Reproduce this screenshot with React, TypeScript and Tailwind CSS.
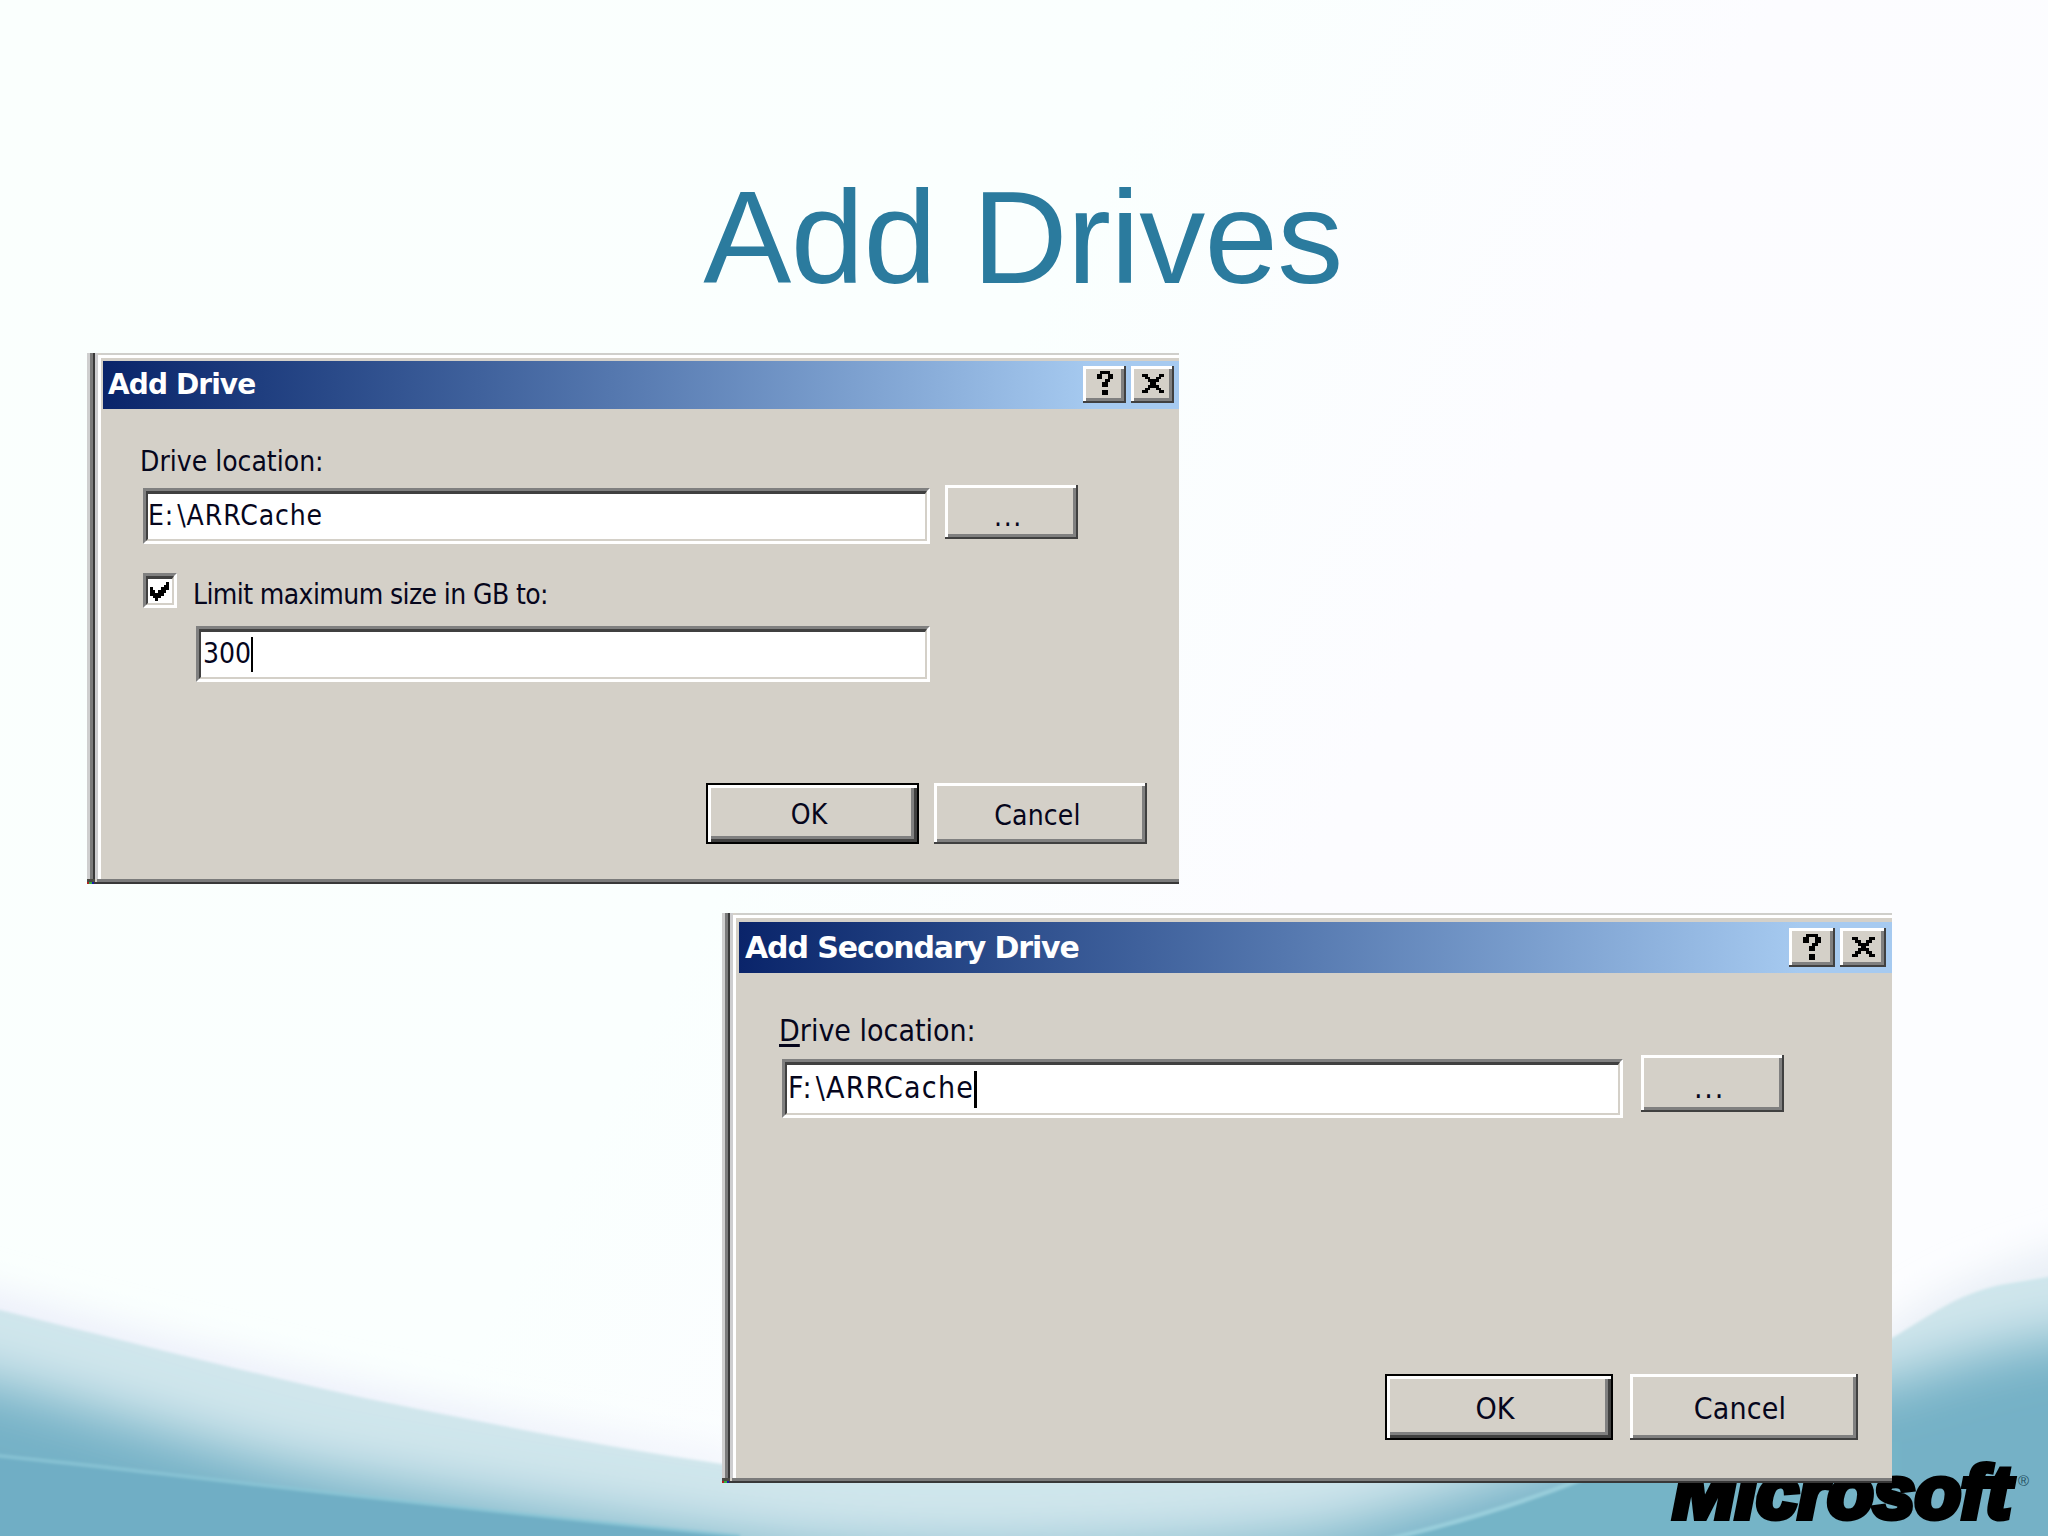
import React from 'react';
import clsx from 'clsx';

type BevelButtonProps = {
  className?: string;
  primary?: boolean;
  label?: string;
  children: React.ReactNode;
};

const BevelButton: React.FC<BevelButtonProps> = ({ className, primary, label, children }) => (
  <button
    type="button"
    aria-label={label}
    className={clsx(
      'flex shrink-0 items-center justify-center bg-[#d4d0c8] whitespace-nowrap text-[#06061c]',
      primary
        ? 'border-2 border-black shadow-[inset_3px_3px_0_#ffffff,inset_-3px_-3px_0_#404040,inset_-6px_-6px_0_#808080]'
        : 'shadow-[inset_-2px_-2px_0_#404040,inset_3px_3px_0_#ffffff,inset_-5px_-5px_0_#808080]',
      className
    )}
  >
    {children}
  </button>
);

type TextFieldProps = {
  className?: string;
  children: React.ReactNode;
};

const TextField: React.FC<TextFieldProps> = ({ className, children }) => (
  <div
    className={clsx(
      'flex shrink-0 border-[3px] border-t-[#808080] border-r-white border-b-white border-l-[#808080] bg-white text-[#06061c]',
      className
    )}
  >
    <div className="flex w-full items-center border-t-[3px] border-r-2 border-b-2 border-l-2 border-t-[#404040] border-r-[#d4d0c8] border-b-[#d4d0c8] border-l-[#404040] whitespace-nowrap">
      {children}
    </div>
  </div>
);

const HelpGlyph: React.FC<{ className?: string }> = ({ className }) => (
  <svg viewBox="0 0 6 9" preserveAspectRatio="none" shapeRendering="crispEdges" className={className}>
    <path d="M1 0h4v1h1v2h-1v1h-1v2h-2v-2h1v-1h1v-2h-2v2h-2v-2h1zM2 7h2v2h-2z" />
  </svg>
);

const CloseGlyph: React.FC<{ className?: string }> = ({ className }) => (
  <svg viewBox="0 0 8 7" preserveAspectRatio="none" shapeRendering="crispEdges" className={className}>
    <path d="M0 0h2v1h1v1h2v-1h1v-1h2v1h-1v1h-1v1h-1v1h1v1h1v1h1v1h-2v-1h-1v-1h-2v1h-1v1h-2v-1h1v-1h1v-1h1v-1h-1v-1h-1v-1h-1z" />
  </svg>
);

const CheckGlyph: React.FC<{ className?: string }> = ({ className }) => (
  <svg viewBox="0 0 7 7" shapeRendering="crispEdges" className={className}>
    <path d="M0 2h1v1h1v1h1v-1h1v-1h1v-1h1v-1h1v3h-1v1h-1v1h-1v1h-1v1h-1v-1h-1v-1h-1z" />
  </svg>
);

type DialogFrameProps = {
  className?: string;
  children: React.ReactNode;
};

// Classic window frame. The right side is cut off, so only three edges are drawn.
const DialogFrame: React.FC<DialogFrameProps> = ({ className, children }) => (
  <section className={clsx('flex flex-col bg-[#d4d0c8]', className)}>
    <div className="flex min-h-0 flex-1">
      <div className="w-[3px] bg-[#cfcfcf]" />
      <div className="w-[3px] bg-[#7b7b7b]" />
      <div className="w-[2px] bg-[#383838]" />
      <div className="w-[3px] bg-[#cdcdcf]" />
      <div className="mt-[2px] w-[3px] bg-white" />
      <div className="flex min-w-0 flex-1 flex-col">
        <div className="h-[2px] shrink-0 bg-[#cfcfcb]" />
        <div className="h-[3px] shrink-0 bg-white" />
        {children}
      </div>
    </div>
    <div className="flex h-[3px] shrink-0">
      <div className="mr-[2px] w-[8px] bg-[#4a4a44]" />
      <div className="flex-1 bg-[#7b7b7b]" />
    </div>
    <div className="flex h-[2px] shrink-0 bg-[#383838]">
      <div className="w-[2px] bg-[#b02020]" />
      <div className="w-[3px] bg-[#30b040]" />
      <div className="w-[2px] bg-[#1818a8]" />
    </div>
  </section>
);

const SlideBackground: React.FC = () => (
  <svg viewBox="0 0 2048 1536" className="absolute inset-0 h-full w-full" aria-hidden="true">
    <defs>
      <linearGradient id="sky" x1="0" y1="0" x2="1" y2="0.4">
        <stop offset="0" stopColor="#fafffd" />
        <stop offset="0.5" stopColor="#fafffe" />
        <stop offset="0.75" stopColor="#fcfcff" />
        <stop offset="1" stopColor="#fcfdff" />
      </linearGradient>
      <filter id="soft" x="-20%" y="-60%" width="140%" height="220%">
        <feGaussianBlur stdDeviation="28" />
      </filter>
      <filter id="haze" x="-20%" y="-60%" width="140%" height="220%">
        <feGaussianBlur stdDeviation="18" />
      </filter>
      <filter id="edge" x="-5%" y="-20%" width="110%" height="140%">
        <feGaussianBlur stdDeviation="1.5" />
      </filter>
      <clipPath id="wave">
        <path d="M-40 1299L0 1310C120 1340 250 1373 364 1398C480 1422 610 1448 722 1464C1000 1470 1300 1460 1560 1430C1740 1400 1850 1360 1892 1338C1930 1316 1955 1295 2000 1285L2048 1277L2088 1272V1580H-40Z" />
      </clipPath>
    </defs>
    <rect width="2048" height="1536" fill="url(#sky)" />
    <path d="M-60 1275C140 1335 400 1400 740 1460V1480L-60 1380Z" fill="#eceffa" filter="url(#haze)" />
    <path d="M1860 1350C1930 1290 1980 1270 2100 1235V1400H1860Z" fill="#e9eff6" filter="url(#haze)" />
    <g filter="url(#edge)">
      <g clipPath="url(#wave)">
        <rect x="-40" y="1260" width="2128" height="320" fill="#d0e6ec" />
        <path d="M-120 1355C60 1394 180 1440 300 1468C420 1492 600 1520 760 1542C900 1560 1150 1555 1320 1532C1500 1490 1700 1400 1880 1385C1960 1360 2000 1342 2180 1320V1720H-120Z" fill="#74b1c6" filter="url(#soft)" />
        <path d="M-40 1452L0 1456C160 1472 420 1506 740 1536V1580H-40Z" fill="#70aec5" />
        <path d="M-40 1452L0 1456C160 1472 420 1506 740 1536" fill="none" stroke="#8ac5d5" strokeWidth="3" />
        <path d="M1385 1540C1470 1520 1530 1500 1585 1478L1900 1440V1580H1385Z" fill="#75b4c7" />
        <path d="M1385 1540C1470 1520 1530 1500 1585 1478" fill="none" stroke="#9bd0dd" strokeWidth="4" />
      </g>
    </g>
  </svg>
);

const MicrosoftLogo: React.FC = () => (
  <svg viewBox="0 0 380 90" className="absolute top-[1446px] left-[1660px] h-[90px] w-[380px]">
    <text
      x="13"
      y="72"
      textLength="338"
      lengthAdjust="spacingAndGlyphs"
      stroke="#000000"
      strokeWidth="6"
      className="font-['Liberation_Sans',Arial,sans-serif] text-[74px] font-bold italic"
    >
      Microsoft
    </text>
    <text x="358" y="40" fill="#24505f" className="font-['Liberation_Sans',Arial,sans-serif] text-[15px]">
      ®
    </text>
  </svg>
);

const AddDriveDialog: React.FC = () => (
  <DialogFrame className="absolute top-[353px] left-[87px] h-[531px] w-[1092px] text-[28px] leading-[34px]">
    <header className="mt-[3px] ml-[2px] flex h-12 shrink-0 items-center bg-linear-to-r from-[#0a246a] to-[#a6caf0] to-92% pr-[5px] pl-[5px]">
      <h2 className="flex-1 font-['DejaVu_Sans',sans-serif] text-[28px] font-bold tracking-[-0.9px] whitespace-nowrap text-white">
        Add Drive
      </h2>
      <BevelButton label="Help" className="mr-[5px] mb-[2px] h-[37px] w-[43px] pb-[2px]">
        <HelpGlyph className="h-6 w-4" />
      </BevelButton>
      <BevelButton label="Close" className="mb-[2px] h-[37px] w-[43px] pb-[2px]">
        <CloseGlyph className="h-[19px] w-[22px]" />
      </BevelButton>
    </header>

    <div className="flex flex-1 flex-col pt-[36px] pr-8 pl-[39px] text-[#06061c]">
      <div className="h-[40px] whitespace-nowrap">Drive location:</div>
      <div className="ml-[3px] flex items-start">
        <TextField className="mt-[3px] h-[56px] w-[787px]">
          <span className="pb-[2px] tracking-[0.9px]">
            E:<span className="ml-[3px]">\ARRCache</span>
          </span>
        </TextField>
        <BevelButton label="Browse" className="ml-[15px] h-[54px] w-[133px] pt-[9px] pr-[6px] tracking-[1.6px]">
          ...
        </BevelButton>
      </div>

      <div className="mt-[29px] ml-[3px] flex items-start">
        <TextField className="h-[35px] w-[34px]">
          <CheckGlyph className="ml-[2px] size-[19px]" />
        </TextField>
        <span className="mt-[5px] ml-[16px] tracking-[-0.6px] whitespace-nowrap">Limit maximum size in GB to:</span>
      </div>
      <TextField className="mt-[14px] ml-[56px] h-[56px] w-[734px]">
        <span className="pb-[2px] pl-[2px]">300</span>
        <span className="mb-px h-[35px] w-[2px] bg-black" />
      </TextField>

      <footer className="mt-[101px] flex justify-end gap-[15px]">
        <BevelButton primary className="h-[61px] w-[213px] pt-[3px] pr-[7px]">
          OK
        </BevelButton>
        <BevelButton className="h-[61px] w-[213px] pt-[4px] pr-[6px] tracking-[0.2px]">Cancel</BevelButton>
      </footer>
    </div>
  </DialogFrame>
);

const AddSecondaryDriveDialog: React.FC = () => (
  <DialogFrame className="absolute top-[913px] left-[722px] h-[570px] w-[1170px] text-[30px] leading-[36px]">
    <header className="mt-[4px] ml-[3px] flex h-[51px] shrink-0 items-center bg-linear-to-r from-[#0a246a] to-[#a6caf0] to-92% pr-[6px] pl-[6px]">
      <h2 className="flex-1 font-['DejaVu_Sans',sans-serif] text-[30px] font-bold tracking-[-1.1px] whitespace-nowrap text-white">
        Add Secondary Drive
      </h2>
      <BevelButton label="Help" className="mr-[5px] h-[39px] w-[46px] pb-[2px]">
        <HelpGlyph className="h-[26px] w-[18px]" />
      </BevelButton>
      <BevelButton label="Close" className="h-[39px] w-[46px] pb-[2px]">
        <CloseGlyph className="h-5 w-[23px]" />
      </BevelButton>
    </header>

    <div className="flex flex-1 flex-col pt-[40px] pr-[34px] pl-[43px] text-[#06061c]">
      <div className="h-[42px] whitespace-nowrap">
        <span className="underline decoration-[3px] underline-offset-[3px]">D</span>rive location:
      </div>
      <div className="ml-[3px] flex items-start">
        <TextField className="mt-[4px] h-[59px] w-[841px]">
          <span className="pb-[3px] pl-px tracking-[1.2px]">
            F:<span className="ml-[3px]">\ARRCache</span>
          </span>
          <span className="h-[37px] w-[3px] bg-black" />
        </TextField>
        <BevelButton label="Browse" className="ml-[18px] h-[57px] w-[143px] pt-[9px] pr-[6px] tracking-[1.8px]">
          ...
        </BevelButton>
      </div>

      <footer className="mt-[256px] flex justify-end gap-[17px]">
        <BevelButton primary className="h-[66px] w-[228px] pt-[3px] pr-[8px]">
          OK
        </BevelButton>
        <BevelButton className="h-[66px] w-[228px] pt-[3px] pr-[8px] tracking-[0.2px]">Cancel</BevelButton>
      </footer>
    </div>
  </DialogFrame>
);

const App: React.FC = () => {
  return (
    <main className="relative h-[1536px] w-[2048px] overflow-hidden font-['DejaVu_Sans_Condensed','DejaVu_Sans',sans-serif]">
      <SlideBackground />
      <h1 className="relative pt-[163px] pr-[2px] text-center font-['Liberation_Sans',Arial,sans-serif] text-[132px] leading-[150px] tracking-[-0.6px] text-[#2b7b9e]">
        Add Drives
      </h1>
      <MicrosoftLogo />
      <AddDriveDialog />
      <AddSecondaryDriveDialog />
    </main>
  );
};

export default App;
